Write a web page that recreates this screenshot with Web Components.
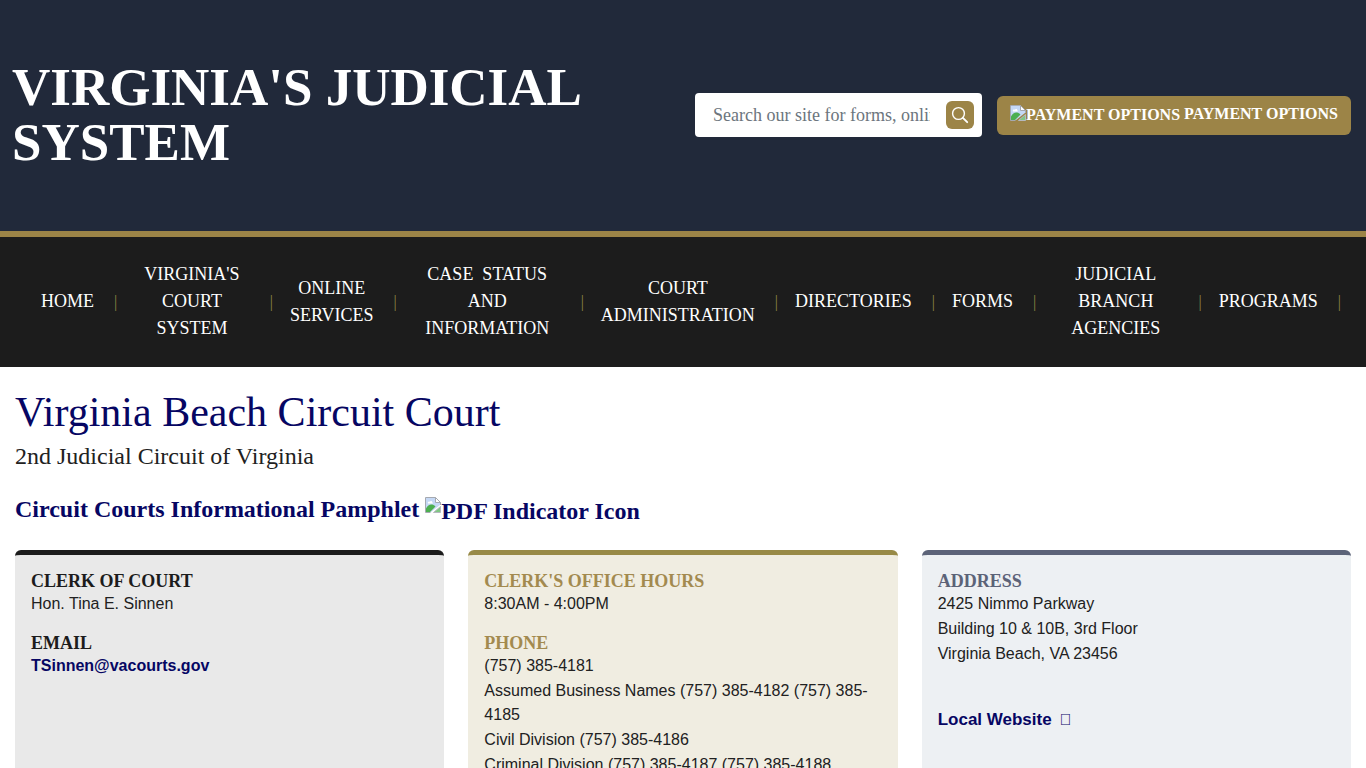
<!DOCTYPE html>
<html lang="en">
<head>
<meta charset="utf-8">
<meta name="viewport" content="width=device-width, initial-scale=1">
<title>Virginia Beach Circuit Court</title>
<style>
    :root {
        --navy: #21293a;
        --gold: #9c8447;
        --black: #1c1c1c;
        --link: #060663;
        --serif: "Liberation Serif", "Times New Roman", serif;
        --sans: "Liberation Sans", Arial, sans-serif;
    }

    body {
        margin: 0;
        background: #fff;
        color: #212121;
        font-family: var(--sans);
        font-size: 16px;
        line-height: 24px;
    }
</style>
</head>
<body>
    <site-header>
        Virginia's Judicial System
        <site-search slot="tools"></site-search>
        <payment-link slot="tools" href="#payment">Payment Options</payment-link>
    </site-header>

    <site-nav>
        <nav-item href="#home">Home</nav-item>
        <nav-item href="#courts">Virginia's Court System</nav-item>
        <nav-item href="#online">Online Services</nav-item>
        <nav-item href="#cases">Case&nbsp; Status and Information</nav-item>
        <nav-item href="#admin">Court Administration</nav-item>
        <nav-item href="#directories">Directories</nav-item>
        <nav-item href="#forms">Forms</nav-item>
        <nav-item href="#agencies">Judicial Branch Agencies</nav-item>
        <nav-item href="#programs">Programs</nav-item>
    </site-nav>

    <court-page>
        <span slot="name">Virginia Beach Circuit Court</span>
        <span slot="circuit">2nd Judicial Circuit of Virginia</span>

        <info-card tone="dark">
            <info-block label="Clerk of Court">
                <div>Hon. Tina E. Sinnen</div>
            </info-block>
            <info-block label="Email">
                <text-link href="mailto:TSinnen@vacourts.gov">TSinnen@vacourts.gov</text-link>
            </info-block>
        </info-card>

        <info-card tone="gold">
            <info-block label="Clerk's Office Hours">
                <div>8:30AM - 4:00PM</div>
            </info-block>
            <info-block label="Phone">
                <div>(757) 385-4181</div>
                <div>Assumed Business Names (757) 385-4182 (757) 385-4185</div>
                <div>Civil Division (757) 385-4186</div>
                <div>Criminal Division (757) 385-4187 (757) 385-4188</div>
            </info-block>
        </info-card>

        <info-card tone="slate">
            <info-block label="Address">
                <div>2425 Nimmo Parkway</div>
                <div>Building 10 &amp; 10B, 3rd Floor</div>
                <div>Virginia Beach, VA 23456</div>
            </info-block>
            <text-link class="site" href="#local" external>Local Website</text-link>
        </info-card>
    </court-page>

<script>
// Base class: opens the shadow root and fills it
class BaseElement extends HTMLElement {
    connectedCallback() {
        if (this.shadowRoot) return;
        this.attachShadow({ mode: 'open' });
        this.shadowRoot.innerHTML = this.render();
    }
}

// Icon for an image that did not load
class MissingImage extends BaseElement {
    render() {
        return `
            <style>
                :host { display: inline-block; width: 16px; height: 16px; }
                svg { display: block; }
            </style>
            <svg width="16" height="16" viewBox="0 0 16 16" aria-hidden="true">
                <path d="M1 1h9.500l4.500 4.500V8l-9 7H1z" fill="#c5d8f5"/>
                <path d="M1 15v-3.500c1.500-3 4-4.500 6-4 1.500.3 2.500 1 3.500 2L5 15z" fill="#4caf50"/>
                <path d="M3 6.500c-.8-1.600 1-2.600 1.800-1.700.8-1.400 2.700-.8 2.500.6.900.1.900 1.100.2 1.100z" fill="#fff"/>
                <path d="M5.500 15.500H.5V.5h10l5 5v2.500" fill="none" stroke="#a5a9b0"/>
                <path d="M10.500.5v5h5z" fill="#fff" stroke="#a5a9b0"/>
                <path d="M15.500 9.500v6h-7z" fill="#7fc783" stroke="#b5b9bf"/>
            </svg>
        `;
    }
}

class SiteHeader extends BaseElement {
    render() {
        return `
            <style>
                :host { display: block; background: var(--navy); border-bottom: 6px solid var(--gold); }
                header {
                    display: flex;
                    align-items: center;
                    gap: 24px;
                    padding: 60px 15px 61px 12px;
                }
                .title {
                    flex: 1;
                    color: #fff;
                    font: bold 53px/55px var(--serif);
                    text-transform: uppercase;
                }
                .tools { display: flex; align-items: center; gap: 15px; }
            </style>
            <header>
                <div class="title"><slot></slot></div>
                <div class="tools"><slot name="tools"></slot></div>
            </header>
        `;
    }
}

class SiteSearch extends BaseElement {
    render() {
        return `
            <style>
                :host { display: block; }
                form {
                    display: flex;
                    align-items: center;
                    gap: 16px;
                    box-sizing: border-box;
                    width: 287px;
                    height: 44px;
                    margin: 0;
                    padding: 0 8px 0 18px;
                    border-radius: 4px;
                    background: #fff;
                }
                input {
                    flex: 1;
                    min-width: 0;
                    padding: 0;
                    border: 0;
                    outline: 0;
                    background: none;
                    color: #212121;
                    font: 18px/28px var(--serif);
                }
                input::placeholder { color: #6c757d; opacity: 1; }
                button {
                    display: flex;
                    align-items: center;
                    justify-content: center;
                    width: 28px;
                    height: 28px;
                    padding: 0;
                    border: 0;
                    border-radius: 6px;
                    background: var(--gold);
                    cursor: pointer;
                }
            </style>
            <form role="search">
                <input type="text" aria-label="Search" placeholder="Search our site for forms, online services">
                <button type="button" aria-label="Submit search">
                    <svg width="18" height="18" viewBox="0 0 18 18" fill="none" stroke="#fff" stroke-linecap="round">
                        <circle cx="7.500" cy="7.500" r="5.900" stroke-width="1.400"/>
                        <path d="M11.900 11.900l4.300 4.300" stroke-width="1.900"/>
                    </svg>
                </button>
            </form>
        `;
    }
}

class PaymentLink extends BaseElement {
    render() {
        return `
            <style>
                :host { display: block; padding-top: 1px; }
                a {
                    display: flex;
                    align-items: flex-start;
                    padding: 6px 13px 8px;
                    border-radius: 6px;
                    background: var(--gold);
                    color: #fff;
                    font: bold 16px/24px var(--serif);
                    text-decoration: none;
                    text-transform: uppercase;
                    white-space: nowrap;
                }
                .alt { display: flex; margin-right: 4px; padding-top: 1px; }
                missing-image { margin-top: 2px; }
            </style>
            <a href="${this.getAttribute('href')}">
                <span class="alt"><missing-image></missing-image>Payment Options</span>
                <slot></slot>
            </a>
        `;
    }
}

class SiteNav extends BaseElement {
    render() {
        return `
            <style>
                :host { display: block; background: var(--black); }
                nav { display: flex; align-items: center; padding: 24px 25px 25px 24px; }
            </style>
            <nav aria-label="Main"><slot></slot></nav>
        `;
    }
}

class NavItem extends BaseElement {
    render() {
        return `
            <style>
                :host {
                    display: flex;
                    align-items: center;
                    color: #fff;
                    font: 18px/27px var(--serif);
                    text-align: center;
                    text-transform: uppercase;
                }
                a { padding: 0 20px 0 17px; color: inherit; text-decoration: none; }
                a:hover { text-decoration: underline; }
                span { color: #8d8443; font-size: 16px; }
            </style>
            <a href="${this.getAttribute('href')}"><slot></slot></a>
            <span aria-hidden="true">|</span>
        `;
    }
}

class CourtPage extends BaseElement {
    render() {
        return `
            <style>
                :host { display: block; padding: 20px 15px 32px; }
                h1, h2, p { margin: 0; font-family: var(--serif); }
                h1 { color: var(--link); font-size: 42px; line-height: 50px; font-weight: normal; }
                h2 { font-size: 24px; line-height: 38px; font-weight: normal; }
                p { margin: 16px 0 21px; font-size: 24px; line-height: 36px; font-weight: bold; }
                p a {
                    display: inline-flex;
                    flex-wrap: wrap;
                    column-gap: 6px;
                    color: var(--link);
                    text-decoration: none;
                }
                .alt { display: flex; padding-top: 2px; }
                missing-image { margin-top: 4px; }
                .cards {
                    display: grid;
                    grid-template-columns: repeat(3, 1fr);
                    gap: 24px;
                }
            </style>
            <main>
                <h1><slot name="name"></slot></h1>
                <h2><slot name="circuit"></slot></h2>
                <p>
                    <a href="#pamphlet">
                        <span>Circuit Courts Informational Pamphlet</span>
                        <span class="alt"><missing-image></missing-image>PDF Indicator Icon</span>
                    </a>
                </p>
                <div class="cards"><slot></slot></div>
            </main>
        `;
    }
}

class InfoCard extends BaseElement {
    render() {
        return `
            <style>
                :host {
                    display: flex;
                    flex-direction: column;
                    gap: 17px;
                    padding: 16px 16px 32px;
                    border-top: 5px solid var(--tone);
                    border-radius: 6px;
                    background: var(--fill);
                    --heading: var(--tone);
                }
                :host([tone="dark"]) { --tone: #1c1c1c; --fill: #e9e9e9; }
                :host([tone="gold"]) { --tone: #988a47; --fill: #f0ede1; --heading: #a38a4f; }
                :host([tone="slate"]) { --tone: #5c6378; --fill: #edf0f3; }
                ::slotted(.site) { margin-top: 25px; font-size: 17px; }
            </style>
            <slot></slot>
        `;
    }
}

class InfoBlock extends BaseElement {
    render() {
        return `
            <style>
                :host { display: block; }
                h3 {
                    margin: 0 0 1px;
                    color: var(--heading);
                    font: bold 18px/20px var(--serif);
                    text-transform: uppercase;
                }
                .lines { display: flex; flex-direction: column; gap: 1px; }
            </style>
            <h3>${this.getAttribute('label')}</h3>
            <div class="lines"><slot></slot></div>
        `;
    }
}

class TextLink extends BaseElement {
    render() {
        const icon = this.hasAttribute('external') ? '<span aria-hidden="true">&#xf08e;</span>' : '';
        return `
            <style>
                :host { display: block; }
                a { color: var(--link); font-weight: bold; text-decoration: none; }
                a:hover { text-decoration: underline; }
                span { margin-left: 8px; font-size: 16px; font-weight: normal; }
            </style>
            <a href="${this.getAttribute('href')}"><slot></slot>${icon}</a>
        `;
    }
}

customElements.define('missing-image', MissingImage);
customElements.define('site-header', SiteHeader);
customElements.define('site-search', SiteSearch);
customElements.define('payment-link', PaymentLink);
customElements.define('site-nav', SiteNav);
customElements.define('nav-item', NavItem);
customElements.define('court-page', CourtPage);
customElements.define('info-card', InfoCard);
customElements.define('info-block', InfoBlock);
customElements.define('text-link', TextLink);
</script>
</body>
</html>
